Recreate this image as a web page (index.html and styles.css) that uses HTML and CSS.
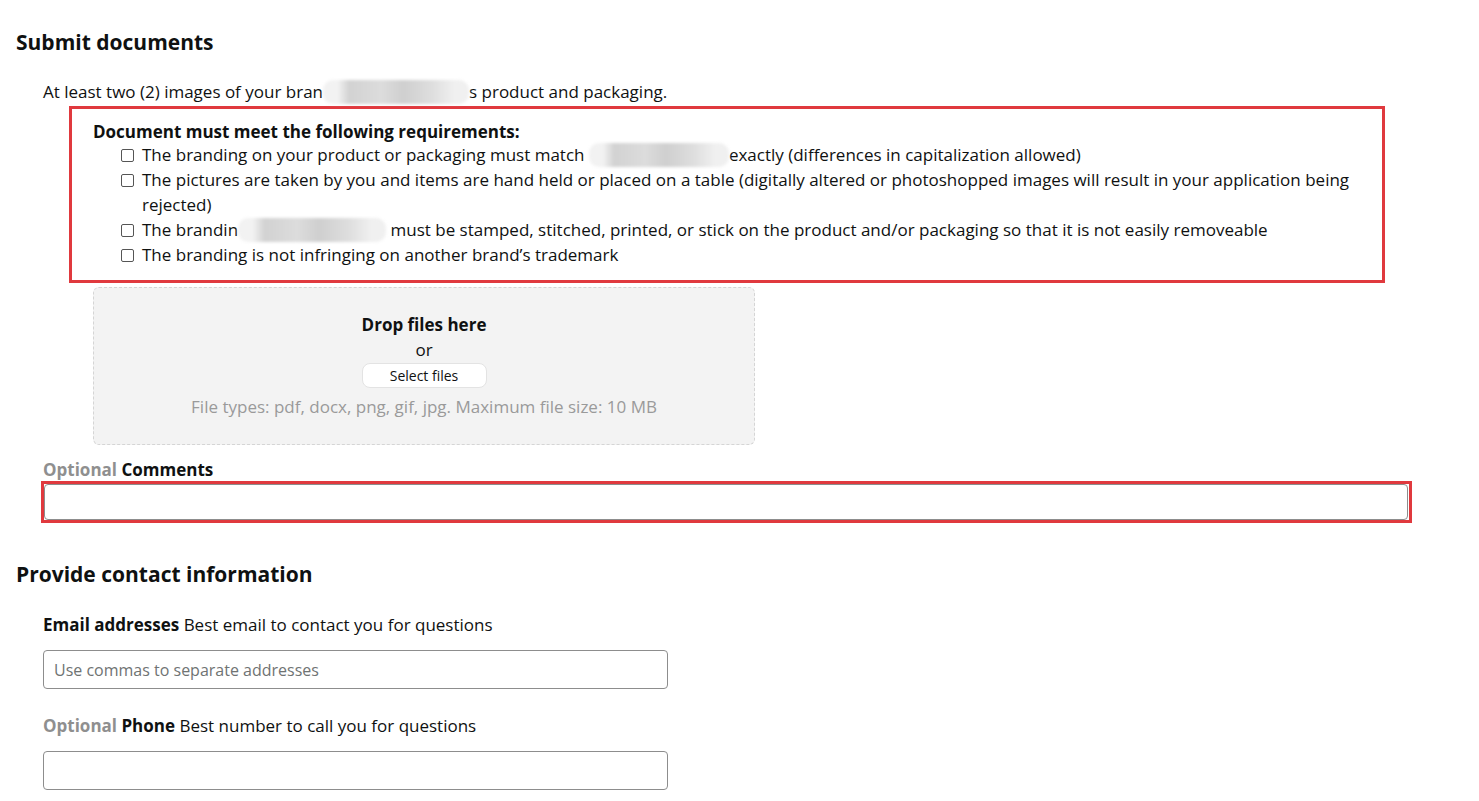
FILE: index.html
```html
<!DOCTYPE html>
<html lang="en">
<head>
    <meta charset="UTF-8">
    <title>Submit documents</title>
    <link rel="stylesheet" href="styles.css">
</head>
<body>
    <section class="block">
        <h2 class="block-title">Submit documents</h2>
        <div class="field">
            <p class="intro">At least two (2) images of your bran<span class="blur w146"></span>s product and packaging.</p>
            <div class="mark reqs">
                <strong class="reqs-title">Document must meet the following requirements:</strong>
                <ul class="checklist">
                    <li><span class="box"></span><span>The branding on your product or packaging must match <span class="blur w135"></span>exactly (differences in capitalization allowed)</span></li>
                    <li><span class="box"></span><span>The pictures are taken by you and items are hand held or placed on a table (digitally altered or photoshopped images will result in your application being rejected)</span></li>
                    <li><span class="box"></span><span>The brandin<span class="blur w148"></span> must be stamped, stitched, printed, or stick on the product and/or packaging so that it is not easily removeable</span></li>
                    <li><span class="box"></span><span>The branding is not infringing on another brand’s trademark</span></li>
                </ul>
            </div>
            <div class="dropzone">
                <strong>Drop files here</strong>
                <span>or</span>
                <button class="btn">Select files</button>
                <span class="hint">File types: pdf, docx, png, gif, jpg. Maximum file size: 10 MB</span>
            </div>
        </div>
        <div class="field">
            <label class="label tight"><span class="opt">Optional</span> Comments</label>
            <div class="mark comment-mark">
                <input class="input wide" type="text">
            </div>
        </div>
    </section>

    <section class="block">
        <h2 class="block-title">Provide contact information</h2>
        <div class="field">
            <label class="label">Email addresses <span class="desc">Best email to contact you for questions</span></label>
            <input class="input" type="text" placeholder="Use commas to separate addresses">
        </div>
        <div class="field">
            <label class="label"><span class="opt">Optional</span> Phone <span class="desc">Best number to call you for questions</span></label>
            <input class="input" type="text">
        </div>
    </section>
</body>
</html>
```

FILE: styles.css
```css
body {
    margin: 0; padding: 0 16px;
    font-family: "Open Sans", "Liberation Sans", Arial, sans-serif;
    font-size: 17px; color: #0f1111; background: #fff;
}
.block-title {font-size: 21px; font-weight: bold; line-height: 28px; margin: 28px 0 24px;}
.block + .block {margin-top: 37px;}
.block + .block .block-title {margin-bottom: 25px;}
.field {padding-left: 27px; margin-bottom: 14px;}
.intro {margin: 0 0 2px; line-height: 24px;}

/* red annotation boxes */
.mark {border: 3px solid #e0393e;}
.reqs {
    margin-left: 26px; width: 1269px;
    padding: 13px 20px 13px 21px;
}
.reqs-title {display: block; line-height: 20px;}
.checklist {list-style: none; margin: 0; padding: 0 0 0 28px;}
.checklist li {display: flex; gap: 8px; line-height: 25px;}
.box {
    flex: none; width: 11px; height: 11px; margin-top: 7px;
    border: 1px solid #555; border-radius: 2px; background: #fff;
}

/* blurred out brand name */
.blur {
    display: inline-block; height: 24px; vertical-align: -6px;
    border-radius: 10px; background: #ececec;
    background-image: linear-gradient(90deg, #f2f2f2 10%, #d2d2d2 18%, #dcdcdc 40%, #cfcfcf 55%, #dedede 75%, #f0f0f0 90%);
    filter: blur(1.5px);
}
.w146 {width: 146px;}
.w135 {width: 140px;}
.w148 {width: 148px;}

.dropzone {
    margin: 4px 0 0 50px; width: 662px; height: 158px;
    box-sizing: border-box; padding-top: 24px;
    display: flex; flex-direction: column; align-items: center;
    background: #f3f3f3; border: 1px dashed #d5d5d5; border-radius: 6px;
    line-height: 25px;
}
.btn {
    margin: 1px 0 6px; width: 125px; height: 25px;
    font: 14px "Open Sans", "Liberation Sans", Arial, sans-serif; color: #0f1111;
    background: #fff; border: 1px solid #e3e3e3; border-radius: 8px;
}
.hint {color: #9a9a9a;}

.label {display: block; font-weight: bold; line-height: 24px; margin-bottom: 13px;}
.label.tight {margin-bottom: 0; line-height: 22px;}
.opt {color: #8f8f8f;}
.desc {font-weight: normal;}

.input {
    display: block; box-sizing: border-box; width: 625px; height: 39px;
    padding: 0 10px; margin-bottom: 25px;
    font: 16px "Open Sans", "Liberation Sans", Arial, sans-serif;
    border: 1px solid #8d8d8d; border-radius: 4px;
}
.input::placeholder {color: #6f7373;}
.comment-mark {margin-left: -2px; width: 1364px; padding: 0 1px 0 0;}
.input.wide {width: 100%; margin: 0; height: 36px;}
```
